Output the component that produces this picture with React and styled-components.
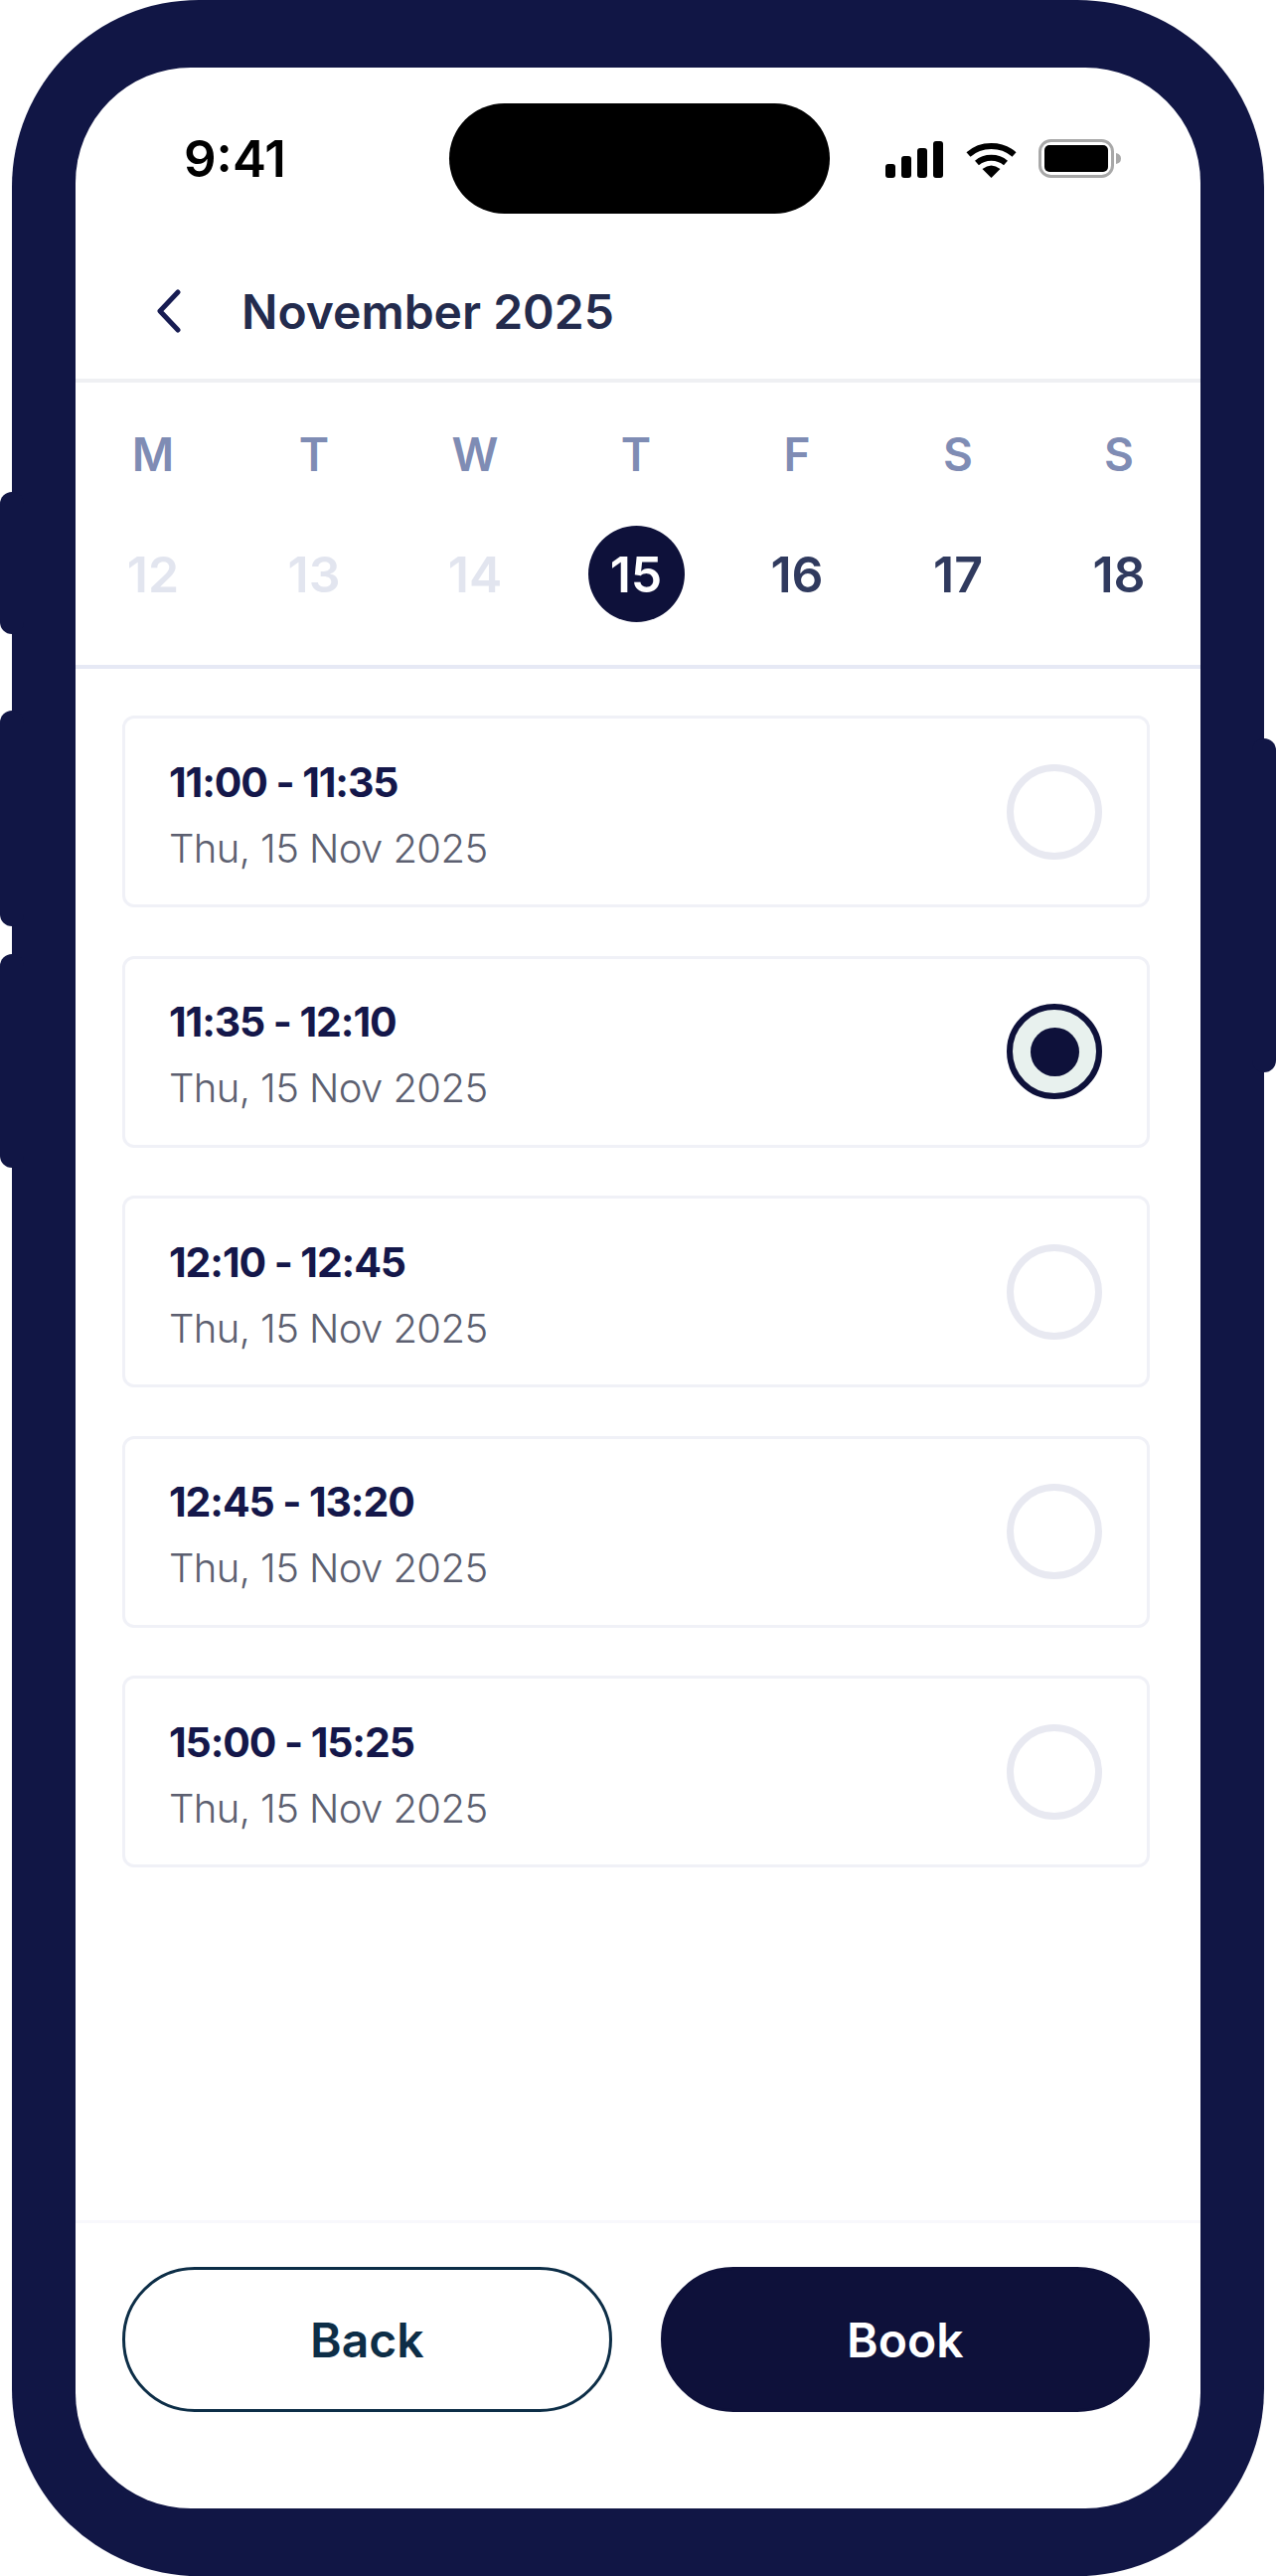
import React from 'react'
import styled, { createGlobalStyle } from 'styled-components'

const days = [
	{ letter: 'M', date: 12, state: 'past' },
	{ letter: 'T', date: 13, state: 'past' },
	{ letter: 'W', date: 14, state: 'past' },
	{ letter: 'T', date: 15, state: 'selected' },
	{ letter: 'F', date: 16, state: 'open' },
	{ letter: 'S', date: 17, state: 'open' },
	{ letter: 'S', date: 18, state: 'open' },
]

const slots = [
	{ time: '11:00 - 11:35' },
	{ time: '11:35 - 12:10', selected: true },
	{ time: '12:10 - 12:45' },
	{ time: '12:45 - 13:20' },
	{ time: '15:00 - 15:25' },
]

const dateColors = {
	past: '#e2e5ef',
	selected: '#ffffff',
	open: '#303a5e',
}

export default function App() {
	return (
		<>
			<GlobalStyle />
			<Phone>
				<SideKey side="left" top={495} length={143} />
				<SideKey side="left" top={715} length={217} />
				<SideKey side="left" top={960} length={215} />
				<SideKey side="right" top={743} length={336} />
				<Screen>
					<StatusBar>
						<Clock>9:41</Clock>
						<Island />
						<StatusIcons>
							<svg width="59" height="37" viewBox="0 0 59 37" fill="#000">
								<rect x="0" y="23" width="10" height="14" rx="3" />
								<rect x="16" y="15" width="10" height="22" rx="3" />
								<rect x="32" y="7" width="10" height="30" rx="3" />
								<rect x="48" y="0" width="10" height="37" rx="3" />
							</svg>
							<svg width="51" height="36" viewBox="0 0 51 36" fill="none">
								<path d="M2.5 12.5 C15 1 36 1 48.5 12.5" stroke="#000" strokeWidth="6" />
								<path d="M11 21 C19 14 32 14 40 21" stroke="#000" strokeWidth="6" />
								<path d="M25.5 36 L16.5 27 Q25.5 20 34.5 27 Z" fill="#000" />
							</svg>
							<svg width="83" height="39" viewBox="0 0 83 39" fill="none">
								<rect x="1.5" y="1.5" width="73" height="36" rx="11" stroke="#a8a8a8" strokeWidth="3" />
								<rect x="6" y="6" width="64" height="27" rx="5" fill="#000" />
								<path d="M78 14 Q83 15 83 19.5 Q83 24 78 25 Z" fill="#a8a8a8" />
							</svg>
						</StatusIcons>
					</StatusBar>

					<Header>
						<svg width="24" height="44" viewBox="0 0 24 44" fill="none">
							<path d="M21 3 L3 22 L21 41" stroke="#171c52" strokeWidth="5" strokeLinecap="round" strokeLinejoin="round" />
						</svg>
						<Title>November 2025</Title>
					</Header>

					<Week>
						{days.map((day) => (
							<Weekday key={day.date}>{day.letter}</Weekday>
						))}
						{days.map((day) => (
							<DateCell key={day.date}>
								<DateNumber state={day.state}>{day.date}</DateNumber>
							</DateCell>
						))}
					</Week>

					<SlotList>
						{slots.map((slot) => (
							<Slot key={slot.time}>
								<div>
									<SlotTime>{slot.time}</SlotTime>
									<SlotDate>Thu, 15 Nov 2025</SlotDate>
								</div>
								<Radio selected={slot.selected}>
									{slot.selected && <RadioDot />}
								</Radio>
							</Slot>
						))}
					</SlotList>

					<Footer>
						<BackButton>Back</BackButton>
						<BookButton>Book</BookButton>
					</Footer>
				</Screen>
			</Phone>
		</>
	)
}

const GlobalStyle = createGlobalStyle`
	html, body {
		margin: 0;
		padding: 0;
		background: #ffffff;
	}
	* {
		box-sizing: border-box;
	}
`

const Phone = styled.div`
	position: relative;
	width: 1260px;
	height: 2592px;
	margin-left: 12px;
	padding: 68px 64px;
	border-radius: 188px;
	background-color: #111645;
	font-family: Inter, "Liberation Sans", sans-serif;
`

const SideKey = styled.div`
	position: absolute;
	top: ${props => props.top}px;
	${props => props.side}: -12px;
	width: 24px;
	height: ${props => props.length}px;
	border-radius: 14px;
	background-color: #111645;
`

const Screen = styled.div`
	display: flex;
	flex-direction: column;
	height: 2456px;
	border-radius: 116px;
	background-color: #ffffff;
	overflow: hidden;
`

const StatusBar = styled.div`
	display: grid;
	grid-template-columns: 376px 383px 1fr;
	align-items: center;
	height: 147px;
	padding-top: 36px;
`

const Clock = styled.div`
	padding-left: 109px;
	font-size: 51px;
	font-weight: 600;
	color: #000000;
`

const Island = styled.div`
	height: 111px;
	border-radius: 56px;
	background-color: #000000;
`

const StatusIcons = styled.div`
	display: flex;
	align-items: flex-end;
	gap: 22px;
	padding-left: 56px;
`

const Header = styled.div`
	display: flex;
	align-items: center;
	gap: 61px;
	height: 170px;
	padding: 30px 0 0 82px;
	border-bottom: 4px solid #eff0f3;
`

const Title = styled.h1`
	margin: 0;
	font-size: 48px;
	font-weight: 600;
	color: #232b4d;
`

const Week = styled.div`
	display: grid;
	grid-template-columns: repeat(7, 162px);
	grid-auto-rows: min-content;
	justify-content: center;
	height: 288px;
	padding: 47px 4px 0 0;
	border-bottom: 4px solid #e6e9f5;
`

const Weekday = styled.div`
	height: 97px;
	line-height: 50px;
	font-size: 46px;
	font-weight: 600;
	text-align: center;
	color: #7f8cb4;
`

const DateCell = styled.div`
	display: flex;
	justify-content: center;
`

const DateNumber = styled.div`
	display: flex;
	align-items: center;
	justify-content: center;
	width: 97px;
	height: 97px;
	border-radius: 50%;
	font-size: 50px;
	font-weight: 600;
	color: ${props => dateColors[props.state]};
	background-color: ${props => props.state === 'selected' ? '#0e113a' : 'transparent'};
`

const SlotList = styled.div`
	display: flex;
	flex-direction: column;
	gap: 48.5px;
	padding: 47px 51px 0 47px;
`

const Slot = styled.div`
	display: flex;
	align-items: center;
	justify-content: space-between;
	height: 193px;
	padding: 0 45px 0 44px;
	border: 3px solid #f0f1f7;
	border-radius: 12px;
`

const SlotTime = styled.div`
	padding-top: 6px;
	font-size: 41px;
	font-weight: 700;
	line-height: 52px;
	letter-spacing: -1.1px;
	color: #14174a;
`

const SlotDate = styled.div`
	margin-top: 16px;
	font-size: 40px;
	font-weight: 300;
	line-height: 50px;
	letter-spacing: -0.6px;
	color: #5c5f70;
`

const Radio = styled.div`
	display: flex;
	align-items: center;
	justify-content: center;
	width: 96px;
	height: 96px;
	border-radius: 50%;
	border: ${props => props.selected ? '6px solid #0e113a' : '7px solid #e8e9f1'};
	background-color: ${props => props.selected ? '#e8f1ee' : 'transparent'};
`

const RadioDot = styled.div`
	width: 49px;
	height: 49px;
	border-radius: 50%;
	background-color: #0e113a;
`

const Footer = styled.div`
	display: flex;
	gap: 49px;
	margin-top: auto;
	height: 290px;
	padding: 44px 51px 0 47px;
	border-top: 3px solid #f8f8fc;
`

const BackButton = styled.button`
	flex: 1;
	height: 146px;
	border: 3px solid #0d2e47;
	border-radius: 73px;
	background-color: #ffffff;
	font-family: Inter, sans-serif;
	font-size: 48px;
	font-weight: 600;
	color: #0d2e47;
`

const BookButton = styled(BackButton)`
	border-color: #0e113a;
	background-color: #0e113a;
	color: #ffffff;
`
